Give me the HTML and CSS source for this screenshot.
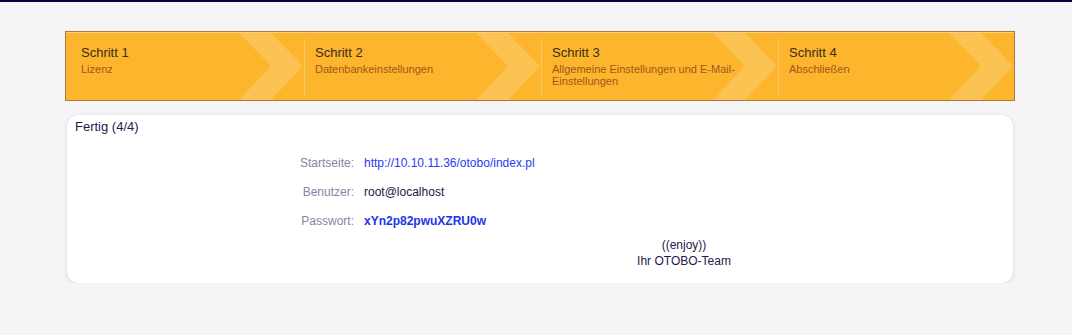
FILE: index.html
```html
<!DOCTYPE html>
<html lang="de">
<head>
  <meta charset="UTF-8" />
  <meta name="viewport" content="width=device-width, initial-scale=1" />
  <title>OTOBO Installation</title>
  <link rel="stylesheet" href="styles.css">
</head>
<body>
<div class="topbar"></div>
<div class="wrapper">
  <div class="steps">
    <div class="step first">
      <div class="step-title">Schritt 1</div>
      <div class="step-sub">Lizenz</div>
    </div>
    <div class="sep"></div>
    <div class="step">
      <div class="step-title">Schritt 2</div>
      <div class="step-sub">Datenbankeinstellungen</div>
    </div>
    <div class="sep"></div>
    <div class="step">
      <div class="step-title">Schritt 3</div>
      <div class="step-sub">Allgemeine Einstellungen und E-Mail-Einstellungen</div>
    </div>
    <div class="sep"></div>
    <div class="step last">
      <div class="step-title">Schritt 4</div>
      <div class="step-sub">Abschließen</div>
    </div>
  </div>

  <div class="card">
    <h2 class="card-title">Fertig (4/4)</h2>
    <div class="fields">
      <div class="label">Startseite:</div>
      <div class="value"><a href="#">http://10.10.11.36/otobo/index.pl</a></div>
      <div class="label">Benutzer:</div>
      <div class="value">root@localhost</div>
      <div class="label">Passwort:</div>
      <div class="value"><strong class="pw">xYn2p82pwuXZRU0w</strong></div>
      <div></div>
      <div class="value greeting">((enjoy))<br>Ihr OTOBO-Team</div>
    </div>
  </div>
</div>
</body>
</html>
```

FILE: styles.css
```css
body {
  margin: 0;
  background: #f5f5f8;
  font-family: "Liberation Sans", Arial, sans-serif;
  color: #1d1b4c;
}
.topbar {
  height: 2px;
  background: #03033f;
}
.wrapper {
  width: 950px;
  margin-left: 65px;
  padding-top: 29px;
}
.steps {
  display: flex;
  height: 68px;
  background: #fcb52d;
  border: 1px solid #aa7a40;
  box-shadow: inset 0 1px 0 rgba(255,255,255,0.35);
}
.step {
  box-sizing: border-box;
  flex: 0 0 236px;
  padding: 13px 20px 0 10px;
  background-image: url("data:image/svg+xml;utf8,<svg xmlns='http://www.w3.org/2000/svg' width='64' height='68' viewBox='0 0 64 68'><polygon points='0,1 32,1 64,34 32,68 0,68 32,34' fill='%23ffffff' fill-opacity='0.18'/></svg>");
  background-repeat: no-repeat;
  background-position: right 1px top 0;
}
.step.first {
  flex-basis: 238px;
  padding-left: 15px;
}
.step.last {
  flex: 1;
}
.sep {
  width: 1px;
  margin: 7px 0 5px;
  background: #f4ca6a;
}
.step-title {
  font-size: 13px;
  color: #3a2d1c;
}
.step-sub {
  margin-top: 3px;
  font-size: 11px;
  color: #a3561a;
}
.card {
  margin: 14px 2px 0;
  background: #fff;
  border-radius: 12px;
  padding: 4px 8px 14px;
  box-shadow: 0 1px 4px rgba(30,30,80,0.15);
}
.card-title {
  margin: 0;
  font-size: 13px;
  font-weight: normal;
  line-height: 15px;
}
.fields {
  display: grid;
  grid-template-columns: 279px 1fr;
  column-gap: 10px;
  row-gap: 15px;
  margin-top: 22px;
  font-size: 12px;
  line-height: 14px;
  padding-right: 1px;
}
.label {
  text-align: right;
  color: #8585a3;
}
.value {
  color: #1a1a3c;
}
.value a {
  color: #1f3cf4;
  text-decoration: none;
}
.pw {
  color: #1a36ea;
}
.greeting {
  margin-top: -6px;
  line-height: 16px;
  text-align: center;
  color: #1d1b4c;
}
```
